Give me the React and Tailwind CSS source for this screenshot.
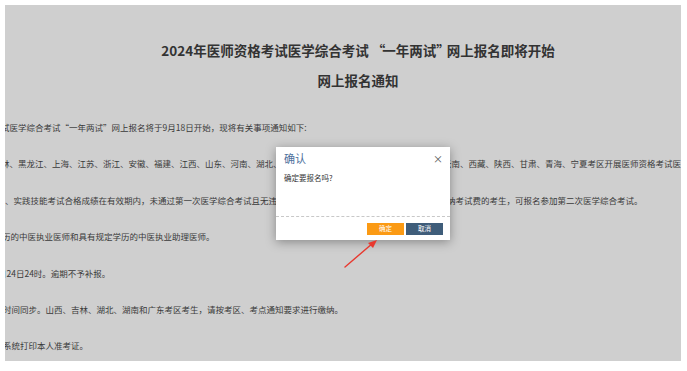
const lines = [
  { text: "试医学综合考试\u201c一年两试\u201d网上报名将于9月18日开始，现将有关事项通知如下:", shift: "-ml-[4px]" },
  {
    text: "林、黑龙江、上海、江苏、浙江、安徽、福建、江西、山东、河南、湖北、湖南、广东广西、海南重庆、四川、贵州、云南、西藏、陕西、甘肃、青海、宁夏考区开展医师资格考试医学综合考试",
    shift: "-ml-[4px]",
  },
  {
    text: "、实践技能考试合格成绩在有效期内，未通过第一次医学综合考试且无违纪违规行为记录，且已在规定时间内按要求缴纳考试费的考生，可报名参加第二次医学综合考试。",
    shift: "ml-0",
  },
  { text: "历的中医执业医师和具有规定学历的中医执业助理医师。", shift: "-ml-[3px]" },
  { text: "月24日24时。逾期不予补报。", shift: "-ml-[7px]" },
  { text: "时间同步。山西、吉林、湖北、湖南和广东考区考生，请按考区、考点通知要求进行缴纳。", shift: "-ml-[2px]" },
  { text: "系统打印本人准考证。", shift: "-ml-[2px]" },
];

function ConfirmDialog() {
  return (
    <div className="absolute left-[271px] top-[142px] flex h-[93px] w-[174px] flex-col bg-white shadow-[0_2px_10px_rgba(0,0,0,0.35)]">
      <div className="flex h-[18px] items-end justify-between pl-[8px] pr-[7px]">
        <span className="text-[11px] leading-[13px] text-[#4d6f9c]">确认</span>
        <span className="pb-[1px] text-[10px] leading-[10px] text-[#555]">×</span>
      </div>
      <p className="mt-[8px] pl-[8px] text-[7.5px] leading-[10px] text-[#333]">确定要报名吗?</p>
      <div className="mt-auto border-t border-dashed border-[#c8c8c8]" />
      <div className="flex h-[23px] items-center justify-end gap-[2px] pr-[7px]">
        <button className="flex h-[12px] w-[37px] items-center justify-center bg-[#fb9a14] text-[6.5px] leading-none text-white">
          确定
        </button>
        <button className="flex h-[12px] w-[37px] items-center justify-center bg-[#3f5d7a] text-[6.5px] leading-none text-white">
          取消
        </button>
      </div>
    </div>
  );
}

function Arrow() {
  return (
    <svg
      className="pointer-events-none absolute left-[330px] top-[225px]"
      width="50"
      height="45"
      viewBox="0 0 50 45"
    >
      <line x1="10" y1="37" x2="38" y2="13" stroke="#e8392f" strokeWidth="1.4" strokeLinecap="round" />
      <polygon points="42,10 33,13 38,18" fill="#e8392f" />
    </svg>
  );
}

export default function App() {
  return (
    <div className="h-[371px] w-[687px] bg-white p-[5px] font-['Noto_Sans_CJK_SC','Noto_Sans',sans-serif]">
      <div className="relative h-[356px] w-[676px] overflow-hidden bg-[#cfcfcf]">
        <div className="pl-[30px] pt-[33px] text-center text-[13.5px] font-bold leading-[24px] text-[#333]">
          <h1>
            2024年医师资格考试医学综合考试 <span className="tracking-[-3px]">&ldquo;</span>一年两试
            <span className="tracking-[-3px]">&rdquo;</span>网上报名即将开始
          </h1>
          <h2 className="mt-[6px]">网上报名通知</h2>
        </div>
        <div className="mt-[17px] text-[8.5px] leading-[36.4px] text-[#3a3a3a]">
          {lines.map((line, i) => (
            <p key={i} className={`whitespace-nowrap ${line.shift}`}>
              {line.text}
            </p>
          ))}
        </div>
        <ConfirmDialog />
        <Arrow />
      </div>
    </div>
  );
}
